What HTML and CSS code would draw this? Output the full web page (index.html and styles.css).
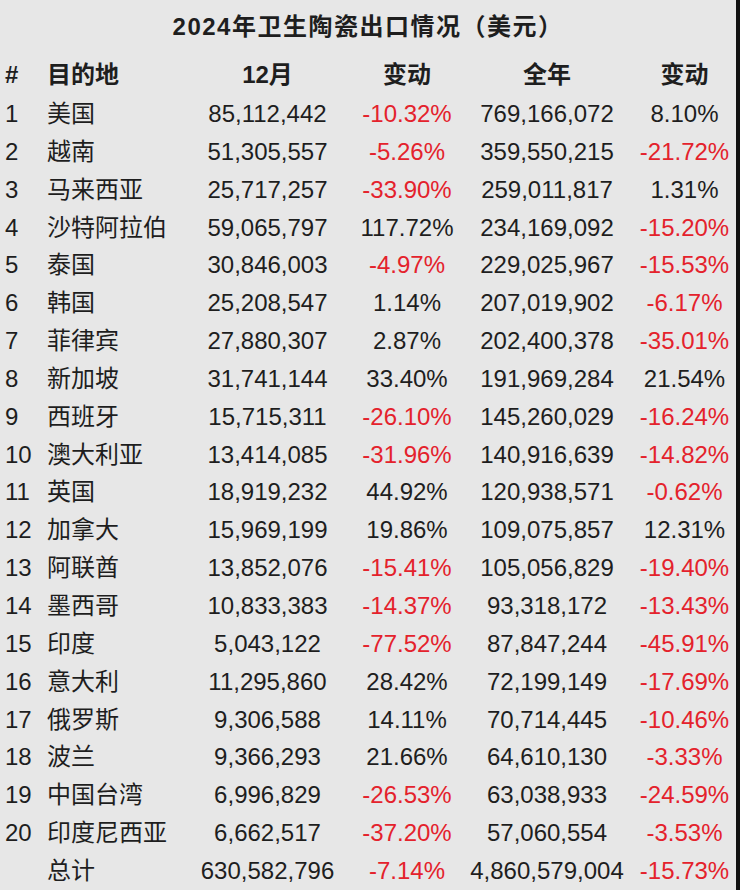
FILE: index.html
```html
<!DOCTYPE html>
<html lang="zh-CN">
<head>
<meta charset="utf-8">
<title>2024年卫生陶瓷出口情况（美元）</title>
<link rel="stylesheet" href="styles.css">
</head>
<body>
<div class="page">
  <h1 class="title">2024年卫生陶瓷出口情况（美元）</h1>
  <div class="row head">
    <div class="rank">#</div><div class="name">目的地</div><div class="num">12月</div><div class="num">变动</div><div class="num">全年</div><div class="num">变动</div>
  </div>
  <div class="row"><div class="rank">1</div><div class="name">美国</div><div class="num">85,112,442</div><div class="num neg">-10.32%</div><div class="num">769,166,072</div><div class="num">8.10%</div></div>
  <div class="row"><div class="rank">2</div><div class="name">越南</div><div class="num">51,305,557</div><div class="num neg">-5.26%</div><div class="num">359,550,215</div><div class="num neg">-21.72%</div></div>
  <div class="row"><div class="rank">3</div><div class="name">马来西亚</div><div class="num">25,717,257</div><div class="num neg">-33.90%</div><div class="num">259,011,817</div><div class="num">1.31%</div></div>
  <div class="row"><div class="rank">4</div><div class="name">沙特阿拉伯</div><div class="num">59,065,797</div><div class="num">117.72%</div><div class="num">234,169,092</div><div class="num neg">-15.20%</div></div>
  <div class="row"><div class="rank">5</div><div class="name">泰国</div><div class="num">30,846,003</div><div class="num neg">-4.97%</div><div class="num">229,025,967</div><div class="num neg">-15.53%</div></div>
  <div class="row"><div class="rank">6</div><div class="name">韩国</div><div class="num">25,208,547</div><div class="num">1.14%</div><div class="num">207,019,902</div><div class="num neg">-6.17%</div></div>
  <div class="row"><div class="rank">7</div><div class="name">菲律宾</div><div class="num">27,880,307</div><div class="num">2.87%</div><div class="num">202,400,378</div><div class="num neg">-35.01%</div></div>
  <div class="row"><div class="rank">8</div><div class="name">新加坡</div><div class="num">31,741,144</div><div class="num">33.40%</div><div class="num">191,969,284</div><div class="num">21.54%</div></div>
  <div class="row"><div class="rank">9</div><div class="name">西班牙</div><div class="num">15,715,311</div><div class="num neg">-26.10%</div><div class="num">145,260,029</div><div class="num neg">-16.24%</div></div>
  <div class="row"><div class="rank">10</div><div class="name">澳大利亚</div><div class="num">13,414,085</div><div class="num neg">-31.96%</div><div class="num">140,916,639</div><div class="num neg">-14.82%</div></div>
  <div class="row"><div class="rank">11</div><div class="name">英国</div><div class="num">18,919,232</div><div class="num">44.92%</div><div class="num">120,938,571</div><div class="num neg">-0.62%</div></div>
  <div class="row"><div class="rank">12</div><div class="name">加拿大</div><div class="num">15,969,199</div><div class="num">19.86%</div><div class="num">109,075,857</div><div class="num">12.31%</div></div>
  <div class="row"><div class="rank">13</div><div class="name">阿联酋</div><div class="num">13,852,076</div><div class="num neg">-15.41%</div><div class="num">105,056,829</div><div class="num neg">-19.40%</div></div>
  <div class="row"><div class="rank">14</div><div class="name">墨西哥</div><div class="num">10,833,383</div><div class="num neg">-14.37%</div><div class="num">93,318,172</div><div class="num neg">-13.43%</div></div>
  <div class="row"><div class="rank">15</div><div class="name">印度</div><div class="num">5,043,122</div><div class="num neg">-77.52%</div><div class="num">87,847,244</div><div class="num neg">-45.91%</div></div>
  <div class="row"><div class="rank">16</div><div class="name">意大利</div><div class="num">11,295,860</div><div class="num">28.42%</div><div class="num">72,199,149</div><div class="num neg">-17.69%</div></div>
  <div class="row"><div class="rank">17</div><div class="name">俄罗斯</div><div class="num">9,306,588</div><div class="num">14.11%</div><div class="num">70,714,445</div><div class="num neg">-10.46%</div></div>
  <div class="row"><div class="rank">18</div><div class="name">波兰</div><div class="num">9,366,293</div><div class="num">21.66%</div><div class="num">64,610,130</div><div class="num neg">-3.33%</div></div>
  <div class="row"><div class="rank">19</div><div class="name">中国台湾</div><div class="num">6,996,829</div><div class="num neg">-26.53%</div><div class="num">63,038,933</div><div class="num neg">-24.59%</div></div>
  <div class="row"><div class="rank">20</div><div class="name">印度尼西亚</div><div class="num">6,662,517</div><div class="num neg">-37.20%</div><div class="num">57,060,554</div><div class="num neg">-3.53%</div></div>
  <div class="row"><div class="rank"></div><div class="name">总计</div><div class="num">630,582,796</div><div class="num neg">-7.14%</div><div class="num">4,860,579,004</div><div class="num neg">-15.73%</div></div>
</div>
</body>
</html>
```

FILE: styles.css
```css
html, body {
  margin: 0;
  padding: 0;
  background: #e7e7e7;
}

.page {
  width: 736px;
  height: 890px;
  box-sizing: content-box;
  border-right: 4px solid #111111;
  background: #e7e7e7;
  color: #1e1e1e;
  font-family: "Liberation Sans", "Noto Sans CJK SC", sans-serif;
  font-size: 24px;
  overflow: hidden;
}

.title {
  margin: 0;
  height: 55px;
  line-height: 53px;
  text-align: center;
  font-size: 24px;
  font-weight: bold;
  letter-spacing: 1.5px;
}

.row {
  display: grid;
  grid-template-columns: 47px 135px 171px 108px 172px 103px;
  height: 37.85px;
  line-height: 37.85px;
  white-space: nowrap;
}

.row.head {
  height: 40px;
  line-height: 40px;
  font-weight: bold;
}

.rank {
  padding-left: 5px;
}

.name {
  text-align: left;
}

.num {
  text-align: center;
}

.neg {
  color: #e4222c;
}
```
